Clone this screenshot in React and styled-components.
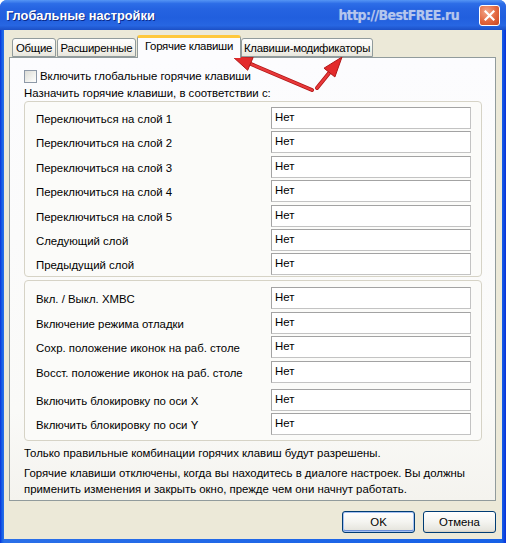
import React from "react";
import styled, { createGlobalStyle } from "styled-components";

const GlobalStyle = createGlobalStyle`
  html, body {
    margin: 0;
    padding: 0;
    background: #ffffff;
  }
  body {
    font-family: "Liberation Sans", Arial, sans-serif;
    font-size: 11.4px;
    color: #000;
  }
`;

const Window = styled.div`
  position: relative;
  width: 506px;
  height: 543px;
  box-sizing: border-box;
  display: flex;
  flex-direction: column;
  border-radius: 7px 7px 0 0;
  background: linear-gradient(90deg, #0831d9 0, #1660e6 2px, #2a6fe8 4px, #1660e6 502px, #0831d9 506px);
  overflow: hidden;
`;

const TitleBar = styled.div`
  height: 30px;
  flex: 0 0 30px;
  display: flex;
  align-items: center;
  padding: 0 6px;
  box-sizing: border-box;
  background: linear-gradient(
    180deg,
    #5595f4 0%,
    #2d6de7 12%,
    #2563e1 30%,
    #215fde 60%,
    #2766e2 85%,
    #1c50c6 100%
  );
`;

const Title = styled.div`
  flex: 1;
  color: #fff;
  font-weight: bold;
  font-size: 12.8px;
  text-shadow: 1px 1px 0 #0a2a8a;
`;

const Watermark = styled.div`
  font-family: "DejaVu Sans Condensed", "DejaVu Sans", sans-serif;
  font-weight: bold;
  font-size: 14px;
  letter-spacing: -0.6px;
  color: #b4c6ee;
  text-shadow: 0 0 1px #6f8fd6;
  margin-right: 20px;
`;

const CloseButton = styled.div`
  width: 21px;
  height: 21px;
  box-sizing: border-box;
  border: 1px solid #fff;
  border-radius: 3px;
  background: radial-gradient(circle at 35% 30%, #f3a68a 0%, #e2673f 55%, #c8451f 100%);
  display: flex;
  align-items: center;
  justify-content: center;
`;

const Client = styled.div`
  flex: 1;
  margin: 0 4px 4px 4px;
  background: #ece9d8;
  display: flex;
  flex-direction: column;
  padding: 5px 6px 6px 5px;
  box-sizing: border-box;
`;

const TabStrip = styled.div`
  display: flex;
  align-items: flex-end;
  height: 22px;
  padding-left: 3px;
  position: relative;
  z-index: 1;
`;

const Tab = styled.div`
  width: ${({ $w }) => $w}px;
  height: ${({ $active }) => ($active ? "23px" : "19px")};
  box-sizing: border-box;
  padding-top: ${({ $active }) => ($active ? "2px" : "3px")};
  margin-right: ${({ $active }) => ($active ? "0" : "1px")};
  margin-bottom: ${({ $active }) => ($active ? "-1px" : "0")};
  border: 1px solid #919b9c;
  border-bottom: ${({ $active }) => ($active ? "none" : "1px solid #919b9c")};
  border-top: ${({ $active }) => ($active ? "3px solid #ffc83c" : "1px solid #919b9c")};
  border-radius: 3px 3px 0 0;
  background: ${({ $active }) =>
    $active ? "#fcfcfe" : "linear-gradient(180deg, #fefefe 0%, #f4f3ee 60%, #e8e6dc 100%)"};
  white-space: nowrap;
  text-align: center;
  letter-spacing: -0.25px;
  line-height: 13px;
`;

const Panel = styled.div`
  flex: 1;
  border: 1px solid #919b9c;
  background: linear-gradient(180deg, #fcfcfe 0%, #fafaf8 80%, #f4f3ee 100%);
  padding: 11px 13px 0 14px;
  display: flex;
  flex-direction: column;
  box-sizing: border-box;
`;

const CheckRow = styled.label`
  display: flex;
  align-items: center;
  height: 14px;
  gap: 3px;
`;

const CheckBox = styled.span`
  width: 13px;
  height: 13px;
  box-sizing: border-box;
  border: 1px solid #8e99a8;
  background: linear-gradient(135deg, #dcdcd6 0%, #f2f2ee 60%, #ffffff 100%);
`;

const Line = styled.div`
  line-height: 16px;
  white-space: nowrap;
`;

const Hint = styled(Line)`
  margin-top: 2px;
`;

const Group = styled.div`
  border: 1px solid #d6d3c6;
  border-radius: 4px;
  background: #fbfbf9;
  padding: ${({ $pad }) => $pad};
  margin-top: ${({ $top }) => $top};
  display: flex;
  flex-direction: column;
  gap: 2.4px;
`;

const Row = styled.div`
  display: flex;
  align-items: center;
  height: 22px;
  margin-top: ${({ $extra }) => ($extra ? "3.6px" : "0")};
`;

const RowLabel = styled.div`
  flex: 1;
  padding-top: 2px;
  white-space: nowrap;
`;

const KeyBox = styled.div`
  width: 200px;
  height: 22px;
  box-sizing: border-box;
  border: 1px solid #a3a3a3;
  border-right-color: #c3c3c3;
  border-bottom-color: #c3c3c3;
  background: #fff;
  padding: 2px 3px;
  line-height: 14px;
`;

const Notes = styled.div`
  margin-top: 4px;
  display: flex;
  flex-direction: column;
  gap: 4px;
`;

const ButtonRow = styled.div`
  display: flex;
  justify-content: flex-end;
  gap: 8px;
  margin-top: 10px;
`;

const Button = styled.div`
  width: 73px;
  height: 22px;
  box-sizing: border-box;
  border: 1px solid #003c74;
  border-radius: 3px;
  background: linear-gradient(180deg, #ffffff 0%, #f4f4f0 50%, #e6e5de 90%, #d6d0c5 100%);
  display: flex;
  align-items: center;
  justify-content: center;
  box-shadow: ${({ $default }) =>
    $default ? "inset 0 0 0 1px #a6c1f2, inset 0 -1px 0 1px #6b8fd8" : "inset 0 -1px 0 0 #d8d3c8"};
`;

const ArrowLayer = styled.svg`
  position: absolute;
  left: 0;
  top: 0;
  pointer-events: none;
`;

const Arrow = ({ x1, y1, x2, y2 }) => {
  const dx = x2 - x1;
  const dy = y2 - y1;
  const len = Math.hypot(dx, dy);
  const ux = dx / len;
  const uy = dy / len;
  const headLen = 20;
  const headW = 7;
  const bx = x2 - ux * headLen;
  const by = y2 - uy * headLen;
  const px = -uy;
  const py = ux;
  const head = `${x2},${y2} ${bx + px * headW},${by + py * headW} ${bx - px * headW},${by - py * headW}`;
  return (
    <g>
      <line x1={x1} y1={y1} x2={bx + ux * 4} y2={by + uy * 4} stroke="#b01616" strokeWidth="4" strokeLinecap="round" />
      <line x1={x1} y1={y1} x2={bx + ux * 4} y2={by + uy * 4} stroke="#e8393a" strokeWidth="2.4" strokeLinecap="round" />
      <polygon points={head} fill="#e32b2c" stroke="#b01616" strokeWidth="1" strokeLinejoin="round" />
    </g>
  );
};

const CloseIcon = () => (
  <svg width="11" height="11" viewBox="0 0 11 11">
    <path d="M1.5 1.5 L9.5 9.5 M9.5 1.5 L1.5 9.5" stroke="#fff" strokeWidth="2.2" strokeLinecap="square" />
  </svg>
);

const layers = [
  "Переключиться на слой 1",
  "Переключиться на слой 2",
  "Переключиться на слой 3",
  "Переключиться на слой 4",
  "Переключиться на слой 5",
  "Следующий слой",
  "Предыдущий слой",
];

const misc = [
  { label: "Вкл. / Выкл. XMBC" },
  { label: "Включение режима отладки" },
  { label: "Сохр. положение иконок на раб. столе" },
  { label: "Восст. положение иконок на раб. столе" },
  { label: "Включить блокировку по оси X", extra: true },
  { label: "Включить блокировку по оси Y" },
];

const tabs = [
  { title: "Общие", w: 44 },
  { title: "Расширенные", w: 79 },
  { title: "Горячие клавиши", w: 104, active: true },
  { title: "Клавиши-модификаторы", w: 132 },
];

export default function App() {
  return (
    <>
      <GlobalStyle />
      <Window>
        <TitleBar>
          <Title>Глобальные настройки</Title>
          <Watermark>http://BestFREE.ru</Watermark>
          <CloseButton>
            <CloseIcon />
          </CloseButton>
        </TitleBar>
        <Client>
          <TabStrip>
            {tabs.map((t) => (
              <Tab key={t.title} $w={t.w} $active={t.active}>
                {t.title}
              </Tab>
            ))}
          </TabStrip>
          <Panel>
            <CheckRow>
              <CheckBox />
              <span>Включить глобальные горячие клавиши</span>
            </CheckRow>
            <Hint>Назначить горячие клавиши, в соответствии с:</Hint>
            <Group $pad="5px 10px 1px 11px" $top="0px">
              {layers.map((l) => (
                <Row key={l}>
                  <RowLabel>{l}</RowLabel>
                  <KeyBox>Нет</KeyBox>
                </Row>
              ))}
            </Group>
            <Group $pad="6px 10px 5px 11px" $top="3px">
              {misc.map((m) => (
                <Row key={m.label} $extra={m.extra}>
                  <RowLabel>{m.label}</RowLabel>
                  <KeyBox>Нет</KeyBox>
                </Row>
              ))}
            </Group>
            <Notes>
              <Line>Только правильные комбинации горячих клавиш будут разрешены.</Line>
              <Line>
                Горячие клавиши отключены, когда вы находитесь в диалоге настроек. Вы должны
                <br />
                применить изменения и закрыть окно, прежде чем они начнут работать.
              </Line>
            </Notes>
          </Panel>
          <ButtonRow>
            <Button $default>OK</Button>
            <Button>Отмена</Button>
          </ButtonRow>
        </Client>
        <ArrowLayer width="506" height="543">
          <Arrow x1={312} y1={90} x2={232} y2={56} />
          <Arrow x1={317} y1={88} x2={342} y2={57} />
        </ArrowLayer>
      </Window>
    </>
  );
}
